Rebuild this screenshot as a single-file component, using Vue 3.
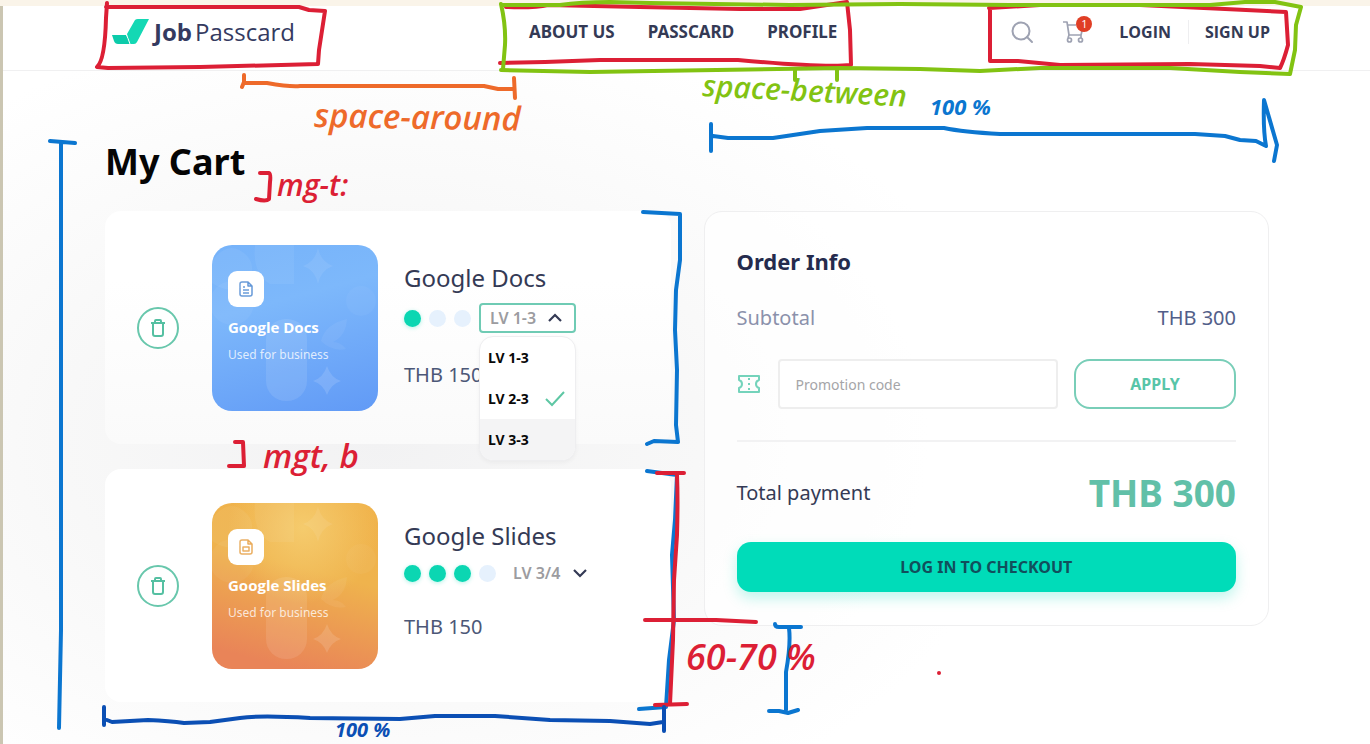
<script setup>
import { ref } from 'vue'

const links = ['About us', 'Passcard', 'Profile']
const levels = ['LV 1-3', 'LV 2-3', 'LV 3-3']
const checked = ref('LV 2-3')
const promo = ref('')
const items = [
  { id: 'docs', name: 'Google Docs', note: 'Used for business', filled: 1, dots: 3, level: 'LV 1-3', price: 'THB 150', open: true },
  { id: 'slides', name: 'Google Slides', note: 'Used for business', filled: 3, dots: 4, level: 'LV 3/4', price: 'THB 150', open: false }
]
</script>

<template>
  <div class="page">
    <header class="header">
      <a class="logo" href="#">
        <svg width="38" height="26" viewBox="0 0 38 26" aria-hidden="true">
          <path d="M23 1Q24 0 26 0h11L25 23q-1 2-3 2h-4q-2-5-3-10z" fill="#14d8b4" />
          <path d="M0 16h14q2 1 4 9H6q-3 0-4-3z" fill="#0ccbaa" />
          <path d="M14 15q2 4 4 10" fill="none" stroke="#fff" stroke-width="1" />
        </svg>
        <span class="brand"><b>Job</b><span>Passcard</span></span>
      </a>
      <div class="header-right">
        <nav class="nav">
          <a v-for="link in links" :key="link" href="#">{{ link }}</a>
        </nav>
        <div class="tools">
          <button class="icon-button" aria-label="Search">
            <svg width="24" height="24" viewBox="0 0 24 24" fill="none" stroke="#9ea2b2" stroke-width="2">
              <circle cx="10" cy="11" r="8.5" /><path d="M16 17l5 5" stroke-linecap="round" />
            </svg>
          </button>
          <button class="icon-button cart" aria-label="Cart">
            <svg width="24" height="24" viewBox="0 0 24 24" fill="none" stroke="#9ea2b2" stroke-width="1.7">
              <path d="M0 2h4l2 13h12l2-8M4.500 5H13M6 15l-1 3M18 15v3" stroke-linejoin="round" />
              <circle cx="6.500" cy="20" r="2" /><circle cx="17.500" cy="20" r="2" />
            </svg>
            <span class="badge">1</span>
          </button>
          <a class="login" href="#">Login</a>
          <a class="signup" href="#">Sign up</a>
        </div>
      </div>
    </header>

    <main class="main">
      <h1>My Cart</h1>
      <div class="columns">
        <section class="cart-list" aria-label="Cart items">
          <article v-for="item in items" :key="item.id" class="item" :class="item.id">
            <button class="remove" :aria-label="'Remove ' + item.name">
              <svg width="16" height="18" viewBox="0 0 16 18" fill="none" stroke="#55c0a2" stroke-width="2" stroke-linejoin="round">
                <path d="M1 4h14M5 4V2q0-1 1-1h4q1 0 1 1v2M3 4v11q0 2 2 2h6q2 0 2-2V4" />
              </svg>
            </button>
            <div class="tile">
              <svg class="pattern" viewBox="0 0 166 166" aria-hidden="true">
                <g fill="#fff">
                  <path d="M0 16Q18-8 36 12q9 12-2 28Q18 50 0 38zM43 0h39v39H58Q40 28 43 0z" opacity=".06" />
                  <circle cx="20" cy="58" r="22" opacity=".05" />
                  <path d="M106 3q3 14 15 18-12 4-15 18-3-14-15-18 12-4 15-18z" opacity=".08" />
                  <rect x="54" y="74" width="41" height="82" rx="20" opacity=".1" />
                  <path d="M115 121q4 12 14 15-10 3-14 14-4-11-14-14 10-3 14-15z" opacity=".13" />
                  <path d="M109 96q4-17 26-22-1 17-14 23 8 0 13 7-14 3-25-8z" opacity=".06" />
                  <circle cx="149" cy="56" r="15" opacity=".04" />
                </g>
              </svg>
              <span class="app-icon">
                <svg width="14" height="16" viewBox="0 0 14 16" fill="none" stroke="currentColor" stroke-width="1.500" stroke-linejoin="round">
                  <path d="M3 1h6l4 4v8q0 2-2 2H3q-2 0-2-2V3q0-2 2-2zM9 1v4h4" />
                  <path v-if="item.id === 'docs'" d="M4 6h2M4 9h6M4 12h6" />
                  <rect v-else x="4" y="8" width="6" height="4" />
                </svg>
              </span>
              <strong>{{ item.name }}</strong>
              <span class="note">{{ item.note }}</span>
            </div>
            <div class="info">
              <h2>{{ item.name }}</h2>
              <div class="level-row">
                <i v-for="n in item.dots" :key="n" class="dot" :class="{ on: n <= item.filled }"></i>
                <div class="picker" :class="{ open: item.open }">
                  <select :aria-label="item.name + ' level'">
                    <option>{{ item.level }}</option>
                  </select>
                  <svg class="chevron" width="14" height="10" viewBox="0 0 14 10" fill="none" stroke="#343a55" stroke-width="2.200">
                    <path :d="item.open ? 'M1 8l6-6 6 6' : 'M1 2l6 6 6-6'" />
                  </svg>
                  <ul v-if="item.open" class="menu" role="listbox" aria-label="Levels">
                    <li v-for="lv in levels" :key="lv" role="option" :aria-selected="lv === checked" @click="checked = lv">
                      {{ lv }}
                      <svg v-if="lv === checked" width="20" height="16" viewBox="0 0 20 16" fill="none" stroke="#5ec7a4" stroke-width="2">
                        <path d="M1 8l6 6L19 1" />
                      </svg>
                    </li>
                  </ul>
                </div>
              </div>
              <p class="price">{{ item.price }}</p>
            </div>
          </article>
        </section>

        <section class="order">
          <h3>Order Info</h3>
          <div class="line subtotal"><span>Subtotal</span><span class="amount">THB 300</span></div>
          <form class="promo" @submit.prevent>
            <label for="promo" aria-label="Promotion code">
              <svg width="24" height="18" viewBox="0 0 24 18" fill="none" stroke="#74d3bb" stroke-width="2" stroke-linejoin="round">
                <path d="M2 1h20v4q-3 1-3 4t3 4v4H2v-4q3-1 3-4T2 5z" />
                <path d="M12 3v12" stroke-dasharray="2 3" />
              </svg>
            </label>
            <input id="promo" v-model="promo" type="text" placeholder="Promotion code" />
            <button class="apply">APPLY</button>
          </form>
          <div class="line total"><span>Total payment</span><strong>THB 300</strong></div>
          <button class="checkout">LOG IN TO CHECKOUT</button>
        </section>
      </div>
    </main>

    <svg class="marks" width="1370" height="744" viewBox="0 0 1370 744" fill="none" stroke-width="4" stroke-linecap="round" stroke-linejoin="round">
      <g stroke="#0b76d0">
        <path d="M50 141L75 143M61 142V630L59 728M711 124V151M713 136L728 138H773L820 131 867 128H944Q963 132 1000 134H1195L1225 136 1240 140 1256 141 1266 146Q1263 130 1264 100L1277 145 1274 161" />
        <path d="M643 212L680 214V260L676 290 675 330 677 370 676 425 678 442 654 441 647 444M647 471L677 475 675 520 672 555 674 620 669 660 666 707 639 709M775 624Q775 627 779 627H801M789 628Q791 644 786 672V710M769 711H779L788 713 798 710" />
      </g>
      <g stroke="#dc1f35">
        <path d="M107 3L106 18Q105 60 97 67L108 68 200 67 318 64 319 50 325 11 309 10 299 7H106" />
        <path d="M506 7Q535 8 548 5L640 7 740 9H800L847 2 850 30 851 65Q825 68 738 60L600 60 545 62 500 63" />
        <path d="M989 8L1040 5H1140L1225 9 1286 12 1288 45Q1284 60 1280 68L1260 66 1190 64 1060 65 1018 61H990V8" />
        <path d="M260 173H269Q271 174 270 182L269 199Q266 202 256 199" />
        <path d="M235 442H243L244 466H229" />
        <path d="M657 473H684M677 475Q678 500 677 535L674 580 673 640 670 704M645 620H716L756 622M655 705L687 704" />
      </g>
      <g stroke="#82c312">
        <path d="M501 4Q506 26 505 45L503 69M501 70L590 72 840 68 920 69 980 71 1040 68 1170 68 1240 72 1290 74 1295 50 1296 25 1301 7 1275 2H1245L1210 5H1010L900 4 790 5 650 3 610 2Q580 2 560 5L502 5" />
        <path d="M795 70V80M837 69V80" />
      </g>
      <g stroke="#ee6a2a"><path d="M244 75V82L242 87M244 83H267Q290 87 300 86H484L498 89H514M514 78L515 98" /></g>
      <g stroke="#0b4fb4"><path d="M104 707V725M107 720L112 722 148 720Q170 721 184 723L210 722 240 718Q260 715 310 718L400 719 435 716H495L550 720 610 721 650 724 663 722M664 707V731" /></g>
      <circle cx="939" cy="673" r="2" fill="#dc1f35" />
      <g class="notes" stroke="none">
        <text x="314" y="127" fill="#ee6a2a" transform="rotate(1 314 127)" class="medium">space-around</text>
        <text x="702" y="96" fill="#82c312" transform="rotate(3 702 96)">space-between</text>
        <text x="930" y="115" fill="#0b76d0" class="small">100 %</text>
        <text x="277" y="196" fill="#dc1f35">mg-t:</text>
        <text x="263" y="468" fill="#dc1f35" class="medium">mgt, b</text>
        <text x="686" y="670" fill="#dc1f35" class="large">60-70 %</text>
        <text x="335" y="737" fill="#0b4fb4" class="tiny">100 %</text>
      </g>
    </svg>
  </div>
</template>

<style>
body { margin: 0; }
</style>

<style scoped>
* { box-sizing: border-box; }
.page {
  position: relative;
  min-height: 100vh;
  overflow: hidden;
  padding: 6px 0 0 3px;
  box-shadow: inset 0 6px #faf4e9, inset 3px 0 #cbc6b2;
  background: radial-gradient(ellipse 640px 420px at 380px 440px, #f2f2f3 0%, #f8f8f8 50%, #fff 100%) #fff;
  color: #343a55;
  font-family: "Noto Sans", "Open Sans", sans-serif;
}
a { color: inherit; text-decoration: none; }
button, input, select { font-family: inherit; margin: 0; }
button { padding: 0; cursor: pointer; }
h1, h2, h3, p, ul { margin: 0; padding: 0; }
.header {
  display: flex;
  justify-content: space-between;
  align-items: center;
  height: 65px;
  padding: 0 100px 12px 109px;
  background: #fff;
  border-bottom: 1px solid #f0f0f1;
}
.logo { display: flex; align-items: center; gap: 4px; color: #343a60; }
.brand { display: flex; gap: 3px; font-size: 24px; line-height: 32px; font-family: "Open Sans", sans-serif; }
.header-right { width: 64%; display: flex; justify-content: space-between; align-items: center; }
.nav { display: flex; gap: 33px; font-size: 17px; }
.tools { display: flex; align-items: center; font-size: 16px; font-family: "Open Sans", sans-serif; }
.nav, .tools { line-height: 24px; font-weight: 700; text-transform: uppercase; }
.icon-button { position: relative; display: flex; border: 0; background: none; }
.cart { margin-left: 28px; }
.badge {
  position: absolute;
  left: 13px;
  top: -4px;
  width: 16px;
  height: 16px;
  border-radius: 50%;
  background: #e03e25;
  color: #fff;
  font-size: 11px;
  line-height: 16px;
}
.login { margin-left: 32px; padding-right: 17px; border-right: 1px solid #eeeef0; }
.signup { margin-left: 16px; }
.main { padding: 66px 101px 42px 102px; }
h1 { font-size: 36px; line-height: 50px; color: #050505; }
.columns { display: grid; grid-template-columns: 1fr 1fr; gap: 33px; align-items: start; margin-top: 24px; }
.cart-list { display: grid; gap: 25px; }
.item {
  display: flex;
  align-items: center;
  height: 233px;
  padding: 0 32px;
  border-radius: 16px;
  background: #fff;
}
.item.docs { background: linear-gradient(#fff 30%, #fafafa); }
.remove {
  flex: none;
  width: 42px;
  height: 42px;
  display: grid;
  place-items: center;
  border: 2px solid #68c7ac;
  border-radius: 50%;
  background: #fff;
}
.tile {
  position: relative;
  flex: none;
  display: flex;
  flex-direction: column;
  width: 166px;
  height: 166px;
  margin: 0 26px 0 33px;
  padding: 26px 16px;
  border-radius: 20px;
  overflow: hidden;
  color: #fff;
}
.docs .tile { background: linear-gradient(165deg, #76b3fa 0%, #7db8fb 35%, #619af6 100%); }
.slides .tile { background: radial-gradient(circle at 55% 15%, #f5cb6d, transparent 45%), linear-gradient(195deg, #f0b24a 0%, #efb34d 40%, #e98458 90%); }
.pattern { position: absolute; inset: 0; }
.app-icon { display: grid; place-items: center; width: 36px; height: 36px; border-radius: 9px; background: #fff; }
.docs .app-icon { color: #6498d8; }
.slides .app-icon { color: #eaac5c; }
.tile strong { position: relative; margin-top: 9px; font-size: 15px; line-height: 22px; font-family: "Open Sans", sans-serif; }
.note { position: relative; margin-top: 6px; font-size: 12px; line-height: 22px; color: #ffffffc8; white-space: nowrap; }
.info { align-self: flex-start; padding-top: 49px; }
h2 { font-size: 24px; line-height: 36px; font-weight: 400; }
.level-row { display: flex; align-items: center; gap: 8px; margin-top: 7px; }
.dot { width: 17px; height: 17px; border-radius: 50%; background: #e6f1fd; }
.dot.on { background: #0bd6b2; box-shadow: 0 1px 4px #0bd6b250; }
.picker { position: relative; display: flex; align-items: center; width: 90px; height: 24px; }
.picker.open { width: 97px; height: 30px; border: 2px solid #6fcbb4; border-radius: 4px; background: #fff; }
select {
  width: 100%;
  padding: 0 24px 0 9px;
  border: 0;
  background: none;
  appearance: none;
  color: #9c9ca0;
  font-size: 16px;
  line-height: 22px;
  font-weight: 600;
}
.chevron { position: absolute; right: 12px; pointer-events: none; }
.picker:not(.open) .chevron { right: 7px; }
.menu {
  position: absolute;
  z-index: 1;
  top: 31px;
  left: -2px;
  width: 97px;
  overflow: hidden;
  list-style: none;
  border: 1px solid #eeeef0;
  border-radius: 14px;
  background: #fff;
  box-shadow: 0 2px 4px #0000000a;
}
.menu li {
  display: flex;
  align-items: center;
  justify-content: space-between;
  height: 41px;
  padding: 0 10px 0 8px;
  color: #080808;
  font-size: 14px;
  font-weight: 700;
}
.menu li:last-child { background: #f4f4f5; }
.price { margin-top: 30px; font-size: 20px; line-height: 24px; color: #4c5777; }
.order {
  padding: 32px 32px 33px;
  border: 1px solid #efeff0;
  border-radius: 18px;
  background: #ffffffb0;
}
h3 { font-size: 22px; line-height: 34px; color: #252b4d; }
.line { display: flex; justify-content: space-between; align-items: center; }
.subtotal { margin-top: 25px; font-size: 20px; line-height: 30px; color: #8b91ab; }
.amount { color: #525e89; }
.promo { display: flex; align-items: center; margin-top: 26px; }
.promo label { flex: none; display: flex; width: 41px; }
.promo input {
  flex: 1;
  min-width: 0;
  height: 50px;
  padding: 0 16px;
  border: 2px solid #eeeeee;
  border-radius: 4px;
  background: #fff;
  font-size: 14px;
}
.promo input::placeholder { color: #a5a5a8; }
.apply {
  width: 162px;
  height: 50px;
  margin-left: 16px;
  border: 2px solid #79ceb8;
  border-radius: 16px;
  background: #fff;
  color: #58c5a8;
  font-size: 16px;
  font-weight: 700;
}
.total { height: 102px; margin-top: 31px; border-top: 2px solid #f2f2f3; font-size: 20px; }
.total strong { font-size: 37px; color: #61c0a8; }
.checkout {
  width: 100%;
  height: 50px;
  border: 0;
  border-radius: 14px;
  background: #00dcb9;
  box-shadow: 0 6px 14px #00dcb940;
  color: #114f5c;
  font-size: 16px;
  font-weight: 700;
}
.marks { position: absolute; top: 0; left: 0; z-index: 2; pointer-events: none; }
.notes { font-family: "Open Sans", sans-serif; font-style: italic; font-weight: 600; font-size: 30px; }
.notes .tiny { font-size: 20px; font-weight: 700; }
.notes .small { font-size: 22px; font-weight: 700; }
.notes .medium { font-size: 33px; }
.notes .large { font-size: 36px; }
</style>
